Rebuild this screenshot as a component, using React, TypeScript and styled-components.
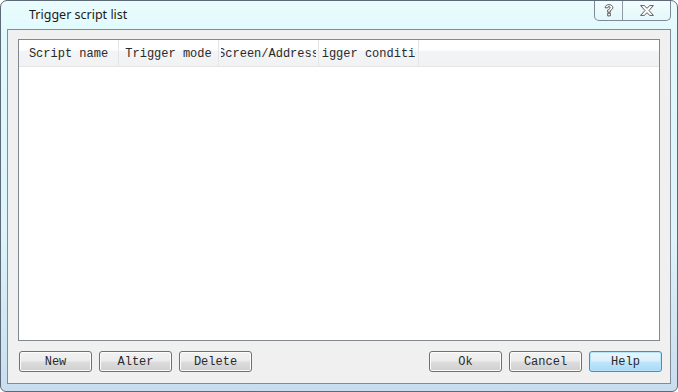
import styled, { createGlobalStyle } from 'styled-components'

const GlobalStyle = createGlobalStyle`
  html, body {
    margin: 0;
    padding: 0;
    background: #ffffff;
  }
`

const columns = ['Script name', 'Trigger mode', 'Screen/Address', 'Trigger condition']
const leftButtons = ['New', 'Alter', 'Delete']
const rightButtons = ['Ok', 'Cancel', 'Help']

function App() {
  return (
    <>
      <GlobalStyle />
      <WindowStyled>
        <TitleBarStyled>
          <TitleStyled>Trigger script list</TitleStyled>
          <CaptionButtonsStyled>
            <CaptionButtonStyled $width={27}>
              <svg width="10" height="13" viewBox="0 0 10 13">
                <path
                  d="M1.2 3.8 C1.2 1.6 2.8 0.7 5 0.7 C7.2 0.7 8.8 1.8 8.8 3.7 C8.8 5.3 7.4 5.9 6.3 6.6 L6.3 8.2 L3.7 8.2 L3.7 6 C4.8 5.3 6.1 4.9 6.1 3.8 C6.1 3 5.7 2.6 5 2.6 C4.2 2.6 3.8 3 3.8 3.8 Z M3.7 9.2 L6.3 9.2 L6.3 11.9 L3.7 11.9 Z"
                  fill="#ffffff"
                  stroke="#4a4a4a"
                  strokeWidth="0.9"
                />
              </svg>
            </CaptionButtonStyled>
            <CaptionButtonStyled $width={47}>
              <svg width="14" height="11" viewBox="0 0 14 11">
                <path
                  d="M0.6 0.6 L4.2 0.6 L7 3.3 L9.8 0.6 L13.4 0.6 L9 5.5 L13.4 10.4 L9.8 10.4 L7 7.7 L4.2 10.4 L0.6 10.4 L5 5.5 Z"
                  fill="#ffffff"
                  stroke="#4a4a4a"
                  strokeWidth="0.9"
                />
              </svg>
            </CaptionButtonStyled>
          </CaptionButtonsStyled>
        </TitleBarStyled>
        <ClientStyled>
          <ListViewStyled>
            <HeaderStyled>
              {columns.map((c) => (
                <HeaderCellStyled key={c}>
                  <HeaderClipStyled>
                    <span>{c}</span>
                  </HeaderClipStyled>
                </HeaderCellStyled>
              ))}
            </HeaderStyled>
          </ListViewStyled>
          <ButtonRowStyled>
            <ButtonGroupStyled>
              {leftButtons.map((b) => (
                <ButtonStyled key={b}>{b}</ButtonStyled>
              ))}
            </ButtonGroupStyled>
            <ButtonGroupStyled>
              {rightButtons.map((b) => (
                <ButtonStyled key={b} $default={b === 'Help'}>
                  {b}
                </ButtonStyled>
              ))}
            </ButtonGroupStyled>
          </ButtonRowStyled>
        </ClientStyled>
      </WindowStyled>
    </>
  )
}

const MONO = `'Liberation Mono', 'DejaVu Sans Mono', monospace`

const WindowStyled = styled.div`
  position: relative;
  box-sizing: border-box;
  width: 678px;
  height: 392px;
  display: flex;
  flex-direction: column;
  padding: 0 6px 7px 6px;
  border: 1px solid #5d6b78;
  border-radius: 7px 7px 6px 6px;
  background: linear-gradient(
    180deg,
    #eafcfd 0%,
    #dff9fc 10%,
    #dcf4fa 60%,
    #c8def0 100%
  );
  overflow: hidden;
`

const TitleBarStyled = styled.div`
  height: 28px;
  flex: none;
  display: flex;
  align-items: center;
  padding-left: 22px;
`

const TitleStyled = styled.div`
  font-family: 'Noto Sans', 'Liberation Sans', sans-serif;
  font-size: 12.5px;
  color: #1a1a1a;
  margin-top: -2px;
`

const CaptionButtonsStyled = styled.div`
  position: absolute;
  top: -1px;
  right: 6px;
  display: flex;
  height: 20px;
  border: 1px solid #7d8a96;
  border-top: none;
  border-radius: 0 0 5px 5px;
  background: linear-gradient(180deg, #f4fdfe 0%, #e3f7fb 100%);
  overflow: hidden;
`

const CaptionButtonStyled = styled.div<{ $width: number }>`
  width: ${(p) => p.$width}px;
  display: flex;
  align-items: center;
  justify-content: center;
  padding-top: 1px;
  & + & {
    border-left: 1px solid #8d99a4;
  }
`

const ClientStyled = styled.div`
  flex: 1;
  display: flex;
  flex-direction: column;
  gap: 10px;
  padding: 9px 10px 11px 10px;
  border: 1px solid #838c96;
  background: #f0f0f0;
`

const ListViewStyled = styled.div`
  flex: 1;
  border: 1px solid #828790;
  background: #ffffff;
`

const HeaderStyled = styled.div`
  display: flex;
  height: 26px;
  border-bottom: 1px solid #e5e5e5;
  background: linear-gradient(180deg, #ffffff 0%, #ffffff 40%, #f3f4f6 41%, #f1f2f4 100%);
`

const HeaderCellStyled = styled.div`
  box-sizing: border-box;
  width: 100px;
  display: flex;
  padding: 0 2px;
  border-right: 1px solid #e3e5e8;
`

const HeaderClipStyled = styled.div`
  flex: 1;
  min-width: 0;
  display: flex;
  justify-content: center;
  align-items: center;
  overflow: hidden;
  white-space: nowrap;
  font-family: ${MONO};
  font-size: 12px;
  color: #2a2a2a;

  span {
    flex: none;
    padding-top: 2px;
  }
`

const ButtonRowStyled = styled.div`
  display: flex;
  justify-content: space-between;
  margin: 0 -2px 0 1px;
`

const ButtonGroupStyled = styled.div`
  display: flex;
  gap: 7px;
`

const ButtonStyled = styled.button<{ $default?: boolean }>`
  box-sizing: border-box;
  width: 73px;
  height: 21px;
  padding: 0;
  border: 1px solid ${(p) => (p.$default ? '#3c8fd0' : '#707070')};
  border-radius: 3px;
  background: ${(p) =>
    p.$default
      ? 'linear-gradient(180deg, #eaf6fd 0%, #d9f0fc 48%, #bee6fd 52%, #a7d9f5 100%)'
      : 'linear-gradient(180deg, #f2f2f2 0%, #ebebeb 48%, #dddddd 52%, #cfcfcf 100%)'};
  box-shadow: inset 0 0 0 1px ${(p) => (p.$default ? '#b8e4fb' : '#fcfcfc')};
  font-family: ${MONO};
  font-size: 12px;
  color: #2a2a2a;
`

export default App
